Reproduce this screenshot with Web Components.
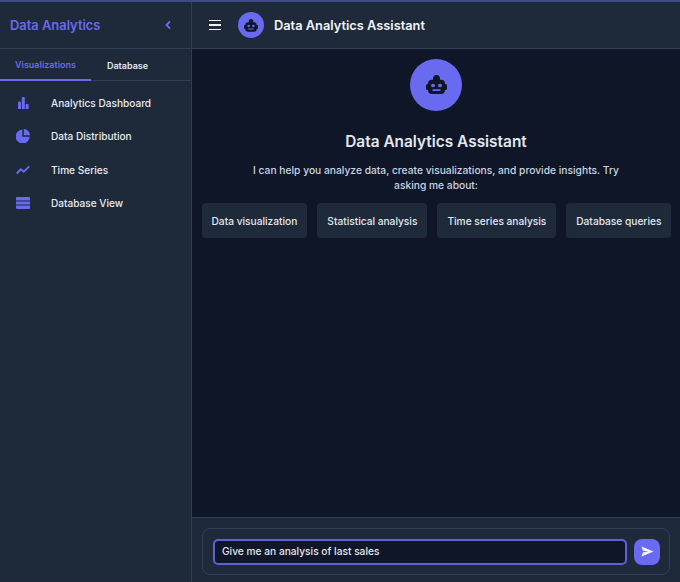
<!DOCTYPE html>
<html><head><meta charset="utf-8">
<style>
html,body{margin:0;height:100%;background:#0f1628;font-family:Inter,"Liberation Sans",sans-serif;overflow:hidden}
</style></head><body>
<app-shell>
  <app-sidebar slot="side">
    <nav-item icon="bar">Analytics Dashboard</nav-item>
    <nav-item icon="pie">Data Distribution</nav-item>
    <nav-item icon="line">Time Series</nav-item>
    <nav-item icon="list">Database View</nav-item>
  </app-sidebar>
  <app-header slot="head"></app-header>
  <welcome-panel slot="body">
    <chip-btn>Data visualization</chip-btn>
    <chip-btn>Statistical analysis</chip-btn>
    <chip-btn>Time series analysis</chip-btn>
    <chip-btn>Database queries</chip-btn>
  </welcome-panel>
  <chat-input slot="foot"></chat-input>
</app-shell>
<script>
const ROBOT=`<path fill="currentColor" fill-rule="evenodd" d="M10.500 0a3.500 3.500 0 0 1 3.300 4.700H15a4 4 0 0 1 4 4v6.300a4 4 0 0 1-4 4H6a4 4 0 0 1-4-4V8.700a4 4 0 0 1 4-4h1.200A3.500 3.500 0 0 1 10.500 0ZM7 8.800a2 1.700 0 1 0 0 3.400 2 1.700 0 0 0 0-3.400Zm7 0a2 1.700 0 1 0 0 3.400 2 1.700 0 0 0 0-3.400ZM6.500 14.200v1.700h8v-1.700Z"/><path fill="currentColor" d="M0 10.500a1.500 1.500 0 0 1 1.500-1.500H3v6H1.500A1.500 1.500 0 0 1 0 13.500ZM18 9h1.500a1.500 1.500 0 0 1 1.500 1.500v3a1.500 1.500 0 0 1-1.500 1.500H18Z"/>`;
const def=(n,html)=>customElements.define(n,class extends HTMLElement{
  constructor(){super();this.attachShadow({mode:'open'}).innerHTML=html}
});
def('app-shell',`<style>
:host{display:grid;grid-template-columns:192px 1fr;grid-template-rows:47px 1fr auto;width:680px;height:580px;border-top:2px solid #3d4a86;background:#0f1628}
.s{grid-row:1/4;display:block}
</style>
<div class="s"><slot name="side"></slot></div>
<slot name="head"></slot><slot name="body"></slot><slot name="foot"></slot>`);
def('app-sidebar',`<style>
:host{display:flex;flex-direction:column;height:100%;box-sizing:border-box;background:#1e2939;border-right:1px solid #323e52}
.top{height:47px;box-sizing:border-box;display:flex;align-items:center;justify-content:space-between;padding:0 19px 0 10px;border-bottom:1px solid #323e52}
h1{margin:0;font-size:12.900px;font-weight:600;color:#686bf0;padding-top:1px}
.tabs{display:flex;height:32px;box-sizing:border-box;border-bottom:1px solid #323e52;font-size:9px;font-weight:600}
.tab{width:91px;display:flex;align-items:center;justify-content:center;color:#e2e8f0;margin-bottom:-1px}
.tab.on{color:#686bf0;border-bottom:2px solid #686bf0;box-sizing:border-box}
.tab+.tab{width:73px}
.list{display:flex;flex-direction:column;padding-top:5.500px}
svg{display:block}
</style>
<div class="top"><h1>Data Analytics</h1><svg width="8" height="10" viewBox="0 0 8 10"><path d="M6 1.300 2.500 5 6 8.700" fill="none" stroke="#686bf0" stroke-width="1.900"/></svg></div>
<div class="tabs"><div class="tab on">Visualizations</div><div class="tab">Database</div></div>
<div class="list"><slot></slot></div>`);
const ICONS={
 bar:`<path d="M2 6.500a1 1 0 0 1 1-1h1a1 1 0 0 1 1 1V13H2zM5.800 2a1 1 0 0 1 1-1h1a1 1 0 0 1 1 1v11h-3zM9.600 9a1 1 0 0 1 1-1h1a1 1 0 0 1 1 1v4h-3z"/>`,
 pie:`<path d="M6.300.600V7.800h7.400A7 7 0 1 1 6.300.600ZM7.800 0a6.400 6.400 0 0 1 6.200 6.200H7.800Z"/>`,
 line:`<path d="M.800 10.500 4.800 6.300l3 2.400 5.400-5.400" fill="none" stroke="currentColor" stroke-width="1.900"/>`,
 list:`<path d="M0 2a1 1 0 0 1 1-1h12a1 1 0 0 1 1 1v2.500H0zM0 5.500h14v3H0zM0 9.500h14V12a1 1 0 0 1-1 1H1a1 1 0 0 1-1-1z"/>`
};
customElements.define('nav-item',class extends HTMLElement{constructor(){super();
 this.attachShadow({mode:'open'}).innerHTML=`<style>
:host{display:flex;align-items:center;height:33.300px;color:#e8ecf2;font-size:10.100px;font-weight:500}
.i{width:51px;padding-left:16px;box-sizing:border-box;color:#686bf0;display:flex}
svg{display:block;fill:currentColor}
</style><span class="i"><svg width="14" height="14" viewBox="0 0 14 14">${ICONS[this.getAttribute('icon')]}</svg></span><slot></slot>`;}});
def('app-header',`<style>
:host{display:flex;align-items:center;box-sizing:border-box;height:47px;background:#1e2939;border-bottom:1px solid #323e52;padding-left:17px}
.b{width:12px;height:9.500px;box-sizing:border-box;border-top:1.700px solid #f1f5f9;border-bottom:1.700px solid #f1f5f9;display:flex;align-items:center}
.b i{display:block;flex:1;height:1.700px;background:#f1f5f9}
.a{width:26px;height:26px;border-radius:50%;background:#686bf0;color:#0f1628;display:flex;align-items:center;justify-content:center;margin:0 10px 0 17px}
h2{margin:0;font-size:12.800px;font-weight:600;color:#f1f5f9;padding-top:1px}
</style><div class="b"><i></i></div><div class="a"><svg width="14" height="13" viewBox="0 0 21 19.500">${ROBOT}</svg></div><h2>Data Analytics Assistant</h2>`);
def('welcome-panel',`<style>
:host{display:flex;flex-direction:column;align-items:center;padding-top:10px;min-height:0;background:#0f1628;box-sizing:border-box}
.a{width:52px;height:52px;border-radius:50%;background:#686bf0;color:#0f1628;display:flex;align-items:center;justify-content:center}
h3{margin:20px 0 0;font-size:15.400px;line-height:22px;font-weight:600;color:#e2e8f0}
p{margin:10px 0 0;width:375px;text-align:center;font-size:10.250px;line-height:15px;font-weight:500;color:#cbd5e1}
.c{display:flex;gap:10px;margin-top:10px;padding-left:1px}
</style><div class="a"><svg width="21" height="19.500" viewBox="0 0 21 19.500">${ROBOT}</svg></div><h3>Data Analytics Assistant</h3>
<p>I can help you analyze data, create visualizations, and provide insights. Try asking me about:</p><div class="c"><slot></slot></div>`);
def('chip-btn',`<style>
:host{display:flex;align-items:center;height:35px;padding:0 10px;background:#1e2939;border-radius:4px;color:#e2e8f0;font-size:10.180px;font-weight:500;white-space:nowrap}
</style><slot></slot>`);
def('chat-input',`<style>
:host{display:block;background:#1e2939;border-top:1px solid #323e52;padding:10px 10px 7px}
.w{display:flex;align-items:center;gap:7px;height:47px;box-sizing:border-box;border:1px solid #323e52;border-radius:8px;padding:0 9px 0 10px}
.f{flex:1;height:26px;box-sizing:border-box;border:2px solid #5d60d8;border-radius:5px;background:#0f1628;color:#e2e8f0;font-size:10.200px;font-weight:500;display:flex;align-items:center;padding:0 0 1px 7px}
.s{width:26px;height:26px;border-radius:8px;background:#686bf0;display:flex;align-items:center;justify-content:center}
</style><div class="w"><div class="f">Give me an analysis of last sales</div><div class="s"><svg width="13" height="11" viewBox="0 0 13 11"><path d="M.500.500 12.500 5.500.500 10.500 2 6.300 7.500 5.500 2 4.700Z" fill="#f1f5f9"/></svg></div></div>`);
</script></body></html>
